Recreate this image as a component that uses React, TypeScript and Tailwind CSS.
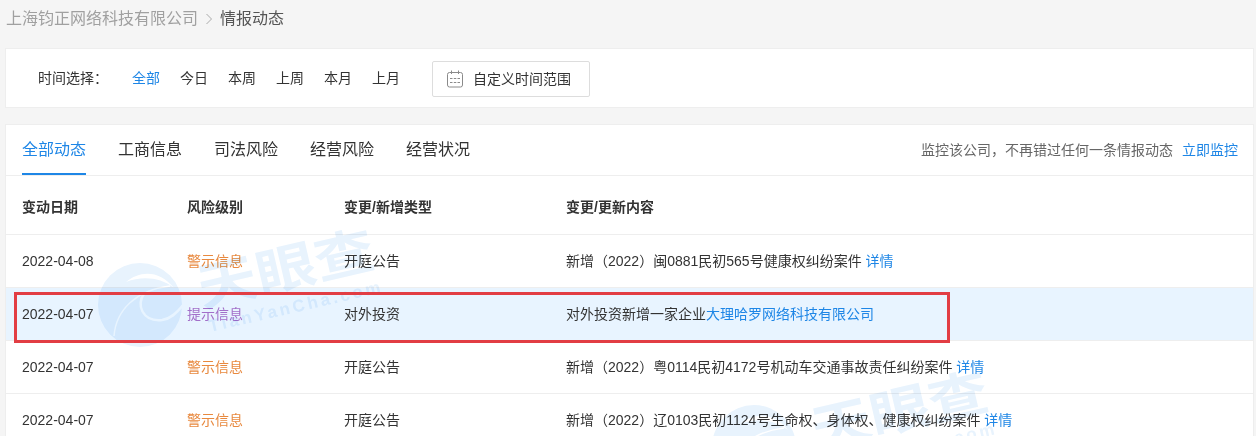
const timeOptions = ['全部', '今日', '本周', '上周', '本月', '上月']
const tabs = ['全部动态', '工商信息', '司法风险', '经营风险', '经营状况']

const rows = [
  { date: '2022-04-08', level: '警示信息', type: '开庭公告', text: '新增（2022）闽0881民初565号健康权纠纷案件', link: '详情' },
  { date: '2022-04-07', level: '提示信息', type: '对外投资', text: '对外投资新增一家企业', link: '大理哈罗网络科技有限公司' },
  { date: '2022-04-07', level: '警示信息', type: '开庭公告', text: '新增（2022）粤0114民初4172号机动车交通事故责任纠纷案件', link: '详情' },
  { date: '2022-04-07', level: '警示信息', type: '开庭公告', text: '新增（2022）辽0103民初1124号生命权、身体权、健康权纠纷案件', link: '详情' },
]

function CalendarIcon() {
  return (
    <svg viewBox="0 0 18 18" className="mr-[10px] h-[18px] w-[18px]" fill="none" stroke="#8a8a8a" strokeWidth="1">
      <rect x="1.5" y="2.5" width="15" height="14.5" rx="2" />
      <path d="M5.5 0.5v3.5M12.5 0.5v3.5" />
      <path d="M4 8.5h2.5M7.8 8.5h2.5M11.5 8.5h2.5M4 12.5h2.5M7.8 12.5h2.5M11.5 12.5h2.5" />
    </svg>
  )
}

function Watermark({ className }: { className: string }) {
  return (
    <div className={`pointer-events-none absolute h-[112px] w-[300px] text-[#e8f3fd] mix-blend-multiply ${className}`}>
      <svg viewBox="0 0 100 94" className="absolute left-0 top-[20px] h-[94px] w-[100px]">
        <circle cx="48" cy="47" r="42" fill="currentColor" />
        <path d="M34 24C48 12 68 12 82 30 68 19 50 18 34 24z" fill="#fff" />
        <path d="M22 78C24 52 44 32 78 28" fill="none" stroke="#fff" strokeWidth="1.5" />
        <path d="M52 36C44 46 50 64 70 62 78 61 84 56 92 46" fill="none" stroke="#fff" strokeWidth="2.5" />
      </svg>
      <div className="absolute left-[104px] top-[2px] w-[180px] -rotate-[13deg] scale-y-[0.85] text-center text-[60px] font-bold leading-none whitespace-nowrap">
        天眼查
      </div>
      <div className="absolute left-[114px] top-[60px] w-[180px] -rotate-[13deg] text-center text-[17px] font-bold leading-none tracking-[3px] whitespace-nowrap">
        TianYanCha.com
      </div>
    </div>
  )
}

export default function App() {
  return (
    <div className="relative h-[436px] w-[1256px] overflow-hidden bg-[#f5f5f5] font-['Liberation_Sans','Noto_Sans_CJK_SC',sans-serif] text-sm text-[#333]">
      {/* Breadcrumb */}
      <div className="flex h-[48px] items-start pl-[6px] pt-[9px] text-[16px] leading-[20px] text-[#a0a0a0]">
        <span>上海钧正网络科技有限公司</span>
        <svg viewBox="0 0 6 12" className="ml-[8px] mr-[8px] mt-[4px] h-[12px] w-[6px]" fill="none" stroke="#aaa" strokeWidth="1">
          <path d="M0.5 1l5 5-5 5" />
        </svg>
        <span className="text-[#555]">情报动态</span>
      </div>

      {/* Time filter */}
      <div className="ml-[5px] mr-[2px] flex h-[60px] items-center border border-[#eee] bg-white pl-[32px]">
        <span className="mr-[24px]">时间选择：</span>
        {timeOptions.map((option, index) => (
          <span key={option} className={`mr-[20px] ${index === 0 ? 'text-[#1e86e6]' : ''}`}>
            {option}
          </span>
        ))}
        <div className="ml-[12px] mt-[2px] flex h-[36px] w-[158px] items-center rounded-[2px] border border-[#ddd] pl-[13px]">
          <CalendarIcon />
          <span className="ml-[-1px]">自定义时间范围</span>
        </div>
      </div>

      {/* Main panel */}
      <div className="ml-[5px] mr-[2px] mt-[16px] border border-[#eee] bg-white">
        <div className="flex h-[51px] items-stretch justify-between border-b border-[#eee] pl-[16px] pr-[15px]">
          <div className="flex gap-[32px] text-[16px]">
            {tabs.map((tab, index) => (
              <div
                key={tab}
                className={`flex items-center border-b-2 pt-[3px] ${index === 0 ? 'border-[#1e86e6] text-[#1e86e6]' : 'border-transparent'}`}
              >
                {tab}
              </div>
            ))}
          </div>
          <div className="flex items-center gap-[9px] text-[#666]">
            <span>监控该公司，不再错过任何一条情报动态</span>
            <span className="text-[#1e86e6]">立即监控</span>
          </div>
        </div>

        <div className="grid h-[59px] grid-cols-[165px_157px_222px_1fr] items-center border-b border-[#eee] pl-[16px] pt-[4px] font-bold">
          <span>变动日期</span>
          <span>风险级别</span>
          <span>变更/新增类型</span>
          <span>变更/更新内容</span>
        </div>

        {rows.map((row, index) => (
          <div
            key={index}
            className={`grid h-[53px] grid-cols-[165px_157px_222px_1fr] items-center border-b border-[#eee] pl-[16px] ${index === 1 ? 'bg-[#e8f4ff]' : ''}`}
          >
            <span>{row.date}</span>
            <span className={index === 1 ? 'text-[#a26fc9]' : 'text-[#e8893f]'}>{row.level}</span>
            <span>{row.type}</span>
            <span>
              {row.text}
              {index !== 1 && ' '}
              <span className="text-[#1e86e6]">{row.link}</span>
            </span>
          </div>
        ))}
      </div>

      {/* Watermarks */}
      <Watermark className="left-[92px] top-[238px]" />
      <Watermark className="left-[706px] top-[380px]" />

      {/* Annotation */}
      <div className="pointer-events-none absolute left-[14px] top-[292px] h-[51px] w-[936px] border-[3px] border-[#e23d44]" />
    </div>
  )
}
